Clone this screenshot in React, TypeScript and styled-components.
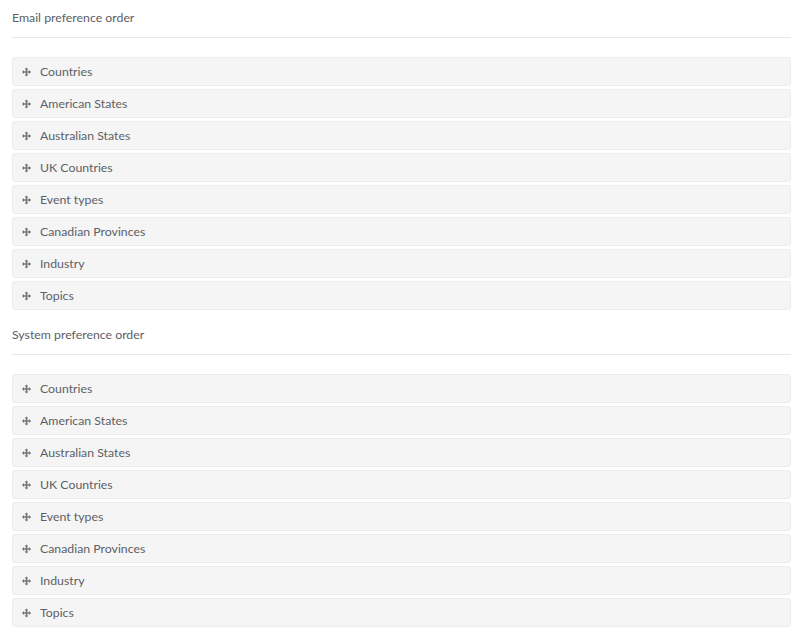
import styled, { createGlobalStyle } from 'styled-components';

const GlobalStyle = createGlobalStyle`
  body {
    margin: 0;
    background: #ffffff;
    font-family: 'Lato', 'Open Sans', sans-serif;
  }
`;

const Page = styled.div`
  padding: 0 16px 0 12px;
`;

const Section = styled.section`
  padding-bottom: 7px;
`;

const Title = styled.div`
  height: 38px;
  box-sizing: border-box;
  padding-top: 10px;
  font-size: 12.3px;
  line-height: 16px;
  color: #5b6065;
  border-bottom: 1px solid #e6e6e6;
  margin-bottom: 19px;
`;

const List = styled.div`
  display: flex;
  flex-direction: column;
  gap: 3px;
`;

const Row = styled.div`
  display: flex;
  align-items: center;
  gap: 9px;
  height: 29px;
  box-sizing: border-box;
  padding-left: 9px;
  background: #f5f5f5;
  border: 1px solid #ececec;
  border-radius: 3px;
  font-size: 12.3px;
  color: #5d6166;
  cursor: move;
`;

const MoveIcon = () => (
  <svg width="9" height="10" viewBox="0 0 10 10" fill="#6f7377">
    <rect x="4.2" y="1.5" width="1.6" height="7" />
    <rect x="1.5" y="4.2" width="7" height="1.6" />
    <polygon points="5,0 2.9,2.2 7.1,2.2" />
    <polygon points="5,10 2.9,7.8 7.1,7.8" />
    <polygon points="0,5 2.2,2.9 2.2,7.1" />
    <polygon points="10,5 7.8,2.9 7.8,7.1" />
  </svg>
);

const items = [
  'Countries',
  'American States',
  'Australian States',
  'UK Countries',
  'Event types',
  'Canadian Provinces',
  'Industry',
  'Topics',
];

const PreferenceSection = ({ title }: { title: string }) => (
  <Section>
    <Title>{title}</Title>
    <List>
      {items.map((item) => (
        <Row key={item}>
          <MoveIcon />
          <span>{item}</span>
        </Row>
      ))}
    </List>
  </Section>
);

export default function App() {
  return (
    <>
      <GlobalStyle />
      <Page>
        <PreferenceSection title="Email preference order" />
        <PreferenceSection title="System preference order" />
      </Page>
    </>
  );
}
